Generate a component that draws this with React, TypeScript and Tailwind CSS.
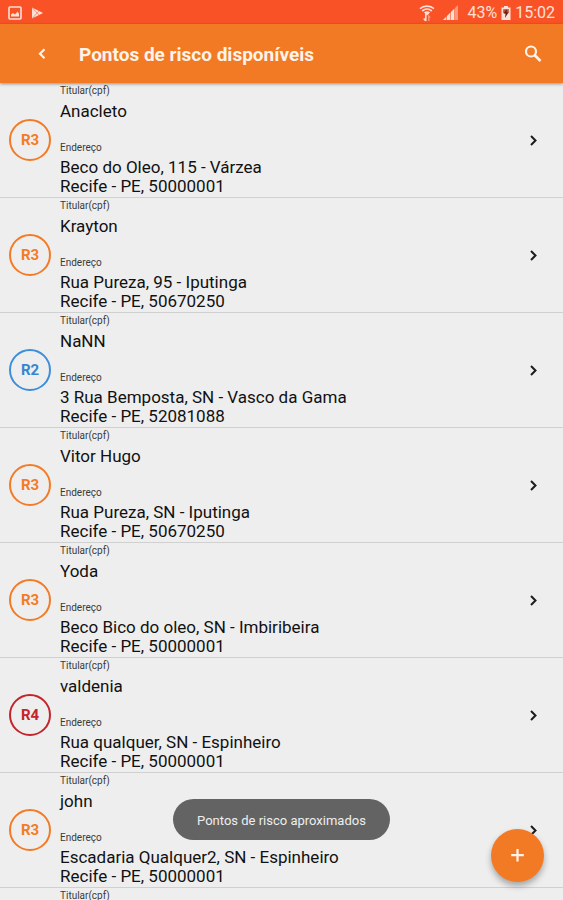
import { useState } from 'react';

type Risk = 'R2' | 'R3' | 'R4';

interface RiskPoint {
  id: number;
  risk?: Risk;
  holder?: string;
  street?: string;
  city?: string;
}

const points: RiskPoint[] = [
  { id: 1, risk: 'R3', holder: 'Anacleto', street: 'Beco do Oleo, 115 - Várzea', city: 'Recife - PE, 50000001' },
  { id: 2, risk: 'R3', holder: 'Krayton', street: 'Rua Pureza, 95 - Iputinga', city: 'Recife - PE, 50670250' },
  { id: 3, risk: 'R2', holder: 'NaNN', street: '3 Rua Bemposta, SN - Vasco da Gama', city: 'Recife - PE, 52081088' },
  { id: 4, risk: 'R3', holder: 'Vitor Hugo', street: 'Rua Pureza, SN - Iputinga', city: 'Recife - PE, 50670250' },
  { id: 5, risk: 'R3', holder: 'Yoda', street: 'Beco Bico do oleo, SN - Imbiribeira', city: 'Recife - PE, 50000001' },
  { id: 6, risk: 'R4', holder: 'valdenia', street: 'Rua qualquer, SN - Espinheiro', city: 'Recife - PE, 50000001' },
  { id: 7, risk: 'R3', holder: 'john', street: 'Escadaria Qualquer2, SN - Espinheiro', city: 'Recife - PE, 50000001' },
  { id: 8 },
];

const riskColors: Record<Risk, string> = {
  R2: 'border-[#3d8fd9] text-[#3585cf]',
  R3: 'border-[#f47b25] text-[#f47b25]',
  R4: 'border-[#c4242b] text-[#c4242b]',
};

const StatusBar = () => (
  <div className="h-6 shrink-0 bg-[#fa5227] text-[#ffe0d6] flex items-center justify-between px-2 pt-px">
    <div className="flex items-center gap-2">
      {/* Screenshot */}
      <svg className="w-[14px] h-[14px]" viewBox="0 0 14 14" fill="none">
        <rect x="1" y="1" width="12" height="12" rx="1" stroke="currentColor" strokeWidth="1.6" />
        <path d="M3 10.5V8.5l2-1.5 2 1.5 2.5-3L11 7.5v3z" fill="currentColor" />
      </svg>
      {/* Play Store */}
      <svg className="w-[14px] h-[14px]" viewBox="0 0 14 14">
        <path d="M2 1.5 13 7 2 12.5z" fill="currentColor" />
        <path d="M2 1.5 9 9M2 12.5 9 5" stroke="#fa5227" strokeWidth="0.8" opacity="0.7" />
      </svg>
    </div>

    <div className="flex items-center text-base leading-6">
      {/* Wifi */}
      <svg className="w-4 h-[18px]" viewBox="0 0 16 18" fill="none" stroke="currentColor">
        <path d="M1 4.6C5 1.2 11 1.2 15 4.6M3.2 7c2.8-2.4 6.8-2.4 9.6 0" strokeWidth="1.7" />
        <path d="M5 8.4c1.8-1.4 4.2-1.4 6 0L8 11.5z" fill="currentColor" stroke="none" />
        <path d="M6.8 10v7M4.8 14.5l2 2.5" strokeWidth="1.5" />
        <path d="M9.8 17v-5l1.4 1.6" strokeWidth="1.3" opacity="0.5" />
      </svg>
      {/* Signal */}
      <svg className="w-4 h-4 ml-2 mr-2" viewBox="0 0 16 16" fill="currentColor">
        <path d="M0 15 3.4 11.6V15zM4 11l3.4-3.4V15H4z" />
        <path d="M8 7l3.4-3.4V15H8z" />
        <path d="M12 3l3-3v15h-3z" opacity="0.5" />
      </svg>
      <span>43%</span>
      {/* Battery */}
      <svg className="w-[10px] h-[14px] mx-1" viewBox="0 0 10 14">
        <path d="M3 0h4v1.5h2.5V14h-9V1.5H3z" fill="currentColor" />
        <path d="M2.2 3.2h5.6v4H2.2z" fill="#b5533d" />
        <path d="M5.8 3 2.8 7.6h1.8L4 12l3.4-5.4H5.5z" fill="#5a1c12" />
      </svg>
      <span>15:02</span>
    </div>
  </div>
);

const PointRow = ({ point }: { point: RiskPoint }) => (
  <li className="h-[115px] border-b border-[#d0d0d0]">
    <a href="#" className="h-full flex items-center pl-[9px] pr-5">
      <div className="w-[51px] shrink-0">
        {point.risk && (
          <span
            className={`w-[42px] h-[42px] rounded-full border-2 flex items-center justify-center text-[15px] font-bold ${riskColors[point.risk]}`}
          >
            {point.risk}
          </span>
        )}
      </div>

      <div className="flex-1 min-w-0 self-start pt-px text-[#111111]">
        <p className="text-[10px] leading-[14px] text-[#3a3a3a]">Titular(cpf)</p>
        {point.holder && (
          <>
            <p className="mt-[3px] text-[17px] leading-5">{point.holder}</p>
            <p className="mt-5 text-[10px] leading-[14px] text-[#3a3a3a]">Endereço</p>
            <p className="mt-[3px] text-[17px] leading-[19px]">{point.street}</p>
            <p className="text-[17px] leading-[19px]">{point.city}</p>
          </>
        )}
      </div>

      {point.risk && (
        <svg className="w-5 h-5 shrink-0" viewBox="0 0 20 20" fill="none" stroke="#1c1c1c" strokeWidth="2">
          <path d="m8 6 4.5 4.5L8 15" />
        </svg>
      )}
    </a>
  </li>
);

export default function App() {
  const [toast] = useState('Pontos de risco aproximados');

  return (
    <div className="h-screen overflow-hidden flex flex-col bg-[#eeeeee] font-['Roboto',sans-serif]">
      <StatusBar />

      {/* Header */}
      <header className="h-[59px] shrink-0 relative bg-[#f27a24] text-[#fff3ea] flex items-center px-[18px] pt-0.5 shadow-[0_1px_3px_rgba(0,0,0,0.4)]">
        <button type="button" aria-label="Voltar" className="w-12 h-12 flex items-center justify-center">
          <svg className="w-5 h-5" viewBox="0 0 20 20" fill="none" stroke="currentColor" strokeWidth="2.2">
            <path d="M12.5 4.2 8 8.7l4.5 4.5" />
          </svg>
        </button>
        <h1 className="flex-1 ml-[13px] text-[19px] leading-6 font-bold truncate">Pontos de risco disponíveis</h1>
        <button type="button" aria-label="Buscar" className="w-6 h-12 flex items-center justify-center">
          <svg className="w-5 h-5" viewBox="0 0 20 20" fill="none" stroke="currentColor">
            <circle cx="8" cy="6.5" r="5" strokeWidth="2.2" />
            <path d="m11.5 10 6 6" strokeWidth="2.6" />
          </svg>
        </button>
      </header>

      {/* Points list */}
      <ul className="flex-1 min-h-0 overflow-hidden">
        {points.map((point) => (
          <PointRow key={point.id} point={point} />
        ))}
      </ul>

      {/* Toast */}
      <div className="fixed inset-x-0 bottom-[60px] flex justify-center pointer-events-none">
        <p role="status" className="pt-px h-[41px] px-6 rounded-full bg-[#636363] text-[#eeeeee] text-[13px] leading-[41px]">
          {toast}
        </p>
      </div>

      <button
        type="button"
        aria-label="Adicionar ponto"
        className="fixed right-[19px] bottom-[18px] w-[53px] h-[53px] rounded-full bg-[#f27a24] text-[#fff3ea] flex items-center justify-center shadow-[0_4px_6px_rgba(0,0,0,0.3)]"
      >
        <svg className="w-5 h-5" viewBox="0 0 20 20" fill="none" stroke="currentColor" strokeWidth="2.2">
          <path d="M9.5 3v12.5M3.2 9.2h12.6" />
        </svg>
      </button>
    </div>
  );
}
